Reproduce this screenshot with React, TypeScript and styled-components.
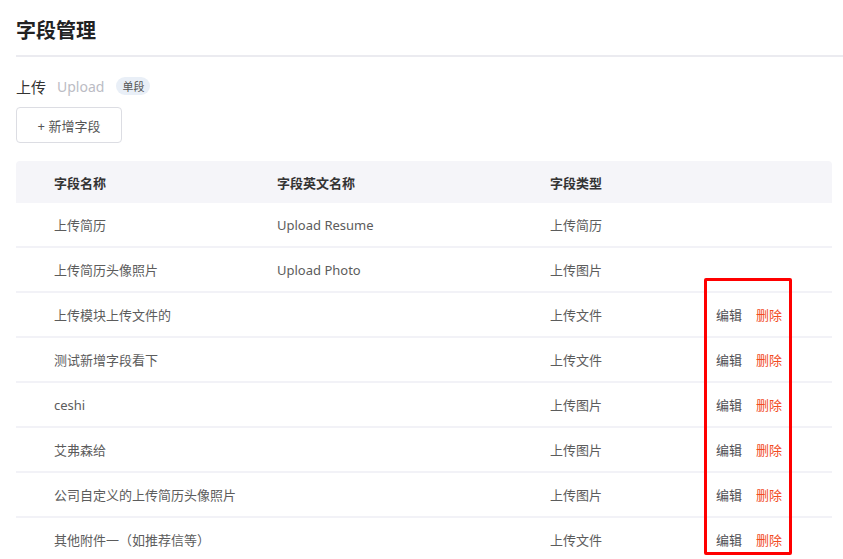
import styled, { createGlobalStyle } from 'styled-components';

interface Field {
    name: string;
    enName?: string;
    type: string;
    editable?: boolean;
};

const fields: Field[] = [
    { name: '上传简历', enName: 'Upload Resume', type: '上传简历' },
    { name: '上传简历头像照片', enName: 'Upload Photo', type: '上传图片' },
    { name: '上传模块上传文件的', type: '上传文件', editable: true },
    { name: '测试新增字段看下', type: '上传文件', editable: true },
    { name: 'ceshi', type: '上传图片', editable: true },
    { name: '艾弗森给', type: '上传图片', editable: true },
    { name: '公司自定义的上传简历头像照片', type: '上传图片', editable: true },
    { name: '其他附件一（如推荐信等）', type: '上传文件', editable: true },
];

export default function App () {
    return (
        <>
            <GlobalStyle />
            <Page>
                <Title>字段管理</Title>
                <Divider />
                <Section>
                    <SectionHead>
                        <SectionName>上传</SectionName>
                        <SectionEn>Upload</SectionEn>
                        <Badge>单段</Badge>
                    </SectionHead>
                    <AddButton>+ 新增字段</AddButton>
                </Section>
                <Table>
                    <HeadRow>
                        <Cell>字段名称</Cell>
                        <Cell>字段英文名称</Cell>
                        <Cell>字段类型</Cell>
                        <Cell />
                    </HeadRow>
                    {fields.map((f, i) => (
                        <Row key={`field-${i}`}>
                            <Cell>{f.name}</Cell>
                            <Cell>{f.enName}</Cell>
                            <Cell>{f.type}</Cell>
                            <Actions>
                                {f.editable && <>
                                    <Action>编辑</Action>
                                    <Action danger>删除</Action>
                                </>}
                            </Actions>
                        </Row>
                    ))}
                    <Highlight />
                </Table>
            </Page>
        </>
    );
}

const GlobalStyle = createGlobalStyle`
html, body {
    margin: 0;
    background: #fff;
    overflow: hidden;
}
body {
    font-family: "Noto Sans", "Noto Sans CJK SC", sans-serif;
    color: #555;
}
`;

const Page = styled.div`
padding: 15px 0 0 16px;
`;

const Title = styled.h1`
margin: 0;
font-size: 20px;
font-weight: 700;
line-height: 30px;
color: #222;
font-family: "Noto Sans CJK SC", sans-serif;
`;

const Divider = styled.div`
height: 2px;
margin-top: 10px;
background: #ebebf0;
`;

const Section = styled.div`
display: flex;
flex-direction: column;
align-items: flex-start;
gap: 10px;
padding-top: 18px;
`;

const SectionHead = styled.div`
display: flex;
align-items: center;
height: 22px;
`;

const SectionName = styled.span`
font-size: 15px;
color: #333;
font-family: "Noto Sans CJK SC", sans-serif;
`;

const SectionEn = styled.span`
margin-left: 11px;
font-size: 14px;
color: #bbbcc4;
`;

const Badge = styled.span`
margin-left: 12px;
padding: 0 6px;
height: 18px;
line-height: 18px;
border-radius: 9px;
background: #e9eff7;
color: #555;
font-size: 11px;
font-family: "Noto Sans CJK SC", sans-serif;
`;

const AddButton = styled.button`
width: 106px;
height: 36px;
padding: 0;
background: #fff;
border: 1px solid #dcdde3;
border-radius: 4px;
color: #555;
font-size: 13px;
font-family: "Noto Sans", "Noto Sans CJK SC", sans-serif;
`;

const Table = styled.div`
position: relative;
width: 816px;
margin-top: 18px;
`;

const Grid = styled.div`
display: grid;
grid-template-columns: 223px 273px 166px 1fr;
align-items: center;
padding-left: 38px;
font-size: 13px;
`;

const HeadRow = styled(Grid)`
height: 42px;
background: #f5f5f9;
border-radius: 4px 4px 0 0;
font-weight: 700;
color: #333;
`;

const Row = styled(Grid)`
height: 45px;
box-sizing: border-box;
border-bottom: 2px solid #f2f2f7;
color: #5c5c5c;
`;

const Cell = styled.div`
white-space: nowrap;
`;

const Actions = styled.div`
display: flex;
gap: 14px;
`;

const Action = styled.span<{ danger?: boolean }>`
color: ${p => p.danger ? '#f24c1f' : '#4f4f55'};
cursor: pointer;
`;

const Highlight = styled.div`
position: absolute;
left: 688px;
top: 117px;
width: 88px;
height: 277px;
box-sizing: border-box;
border: 3px solid #f00;
border-radius: 2px;
pointer-events: none;
`;
